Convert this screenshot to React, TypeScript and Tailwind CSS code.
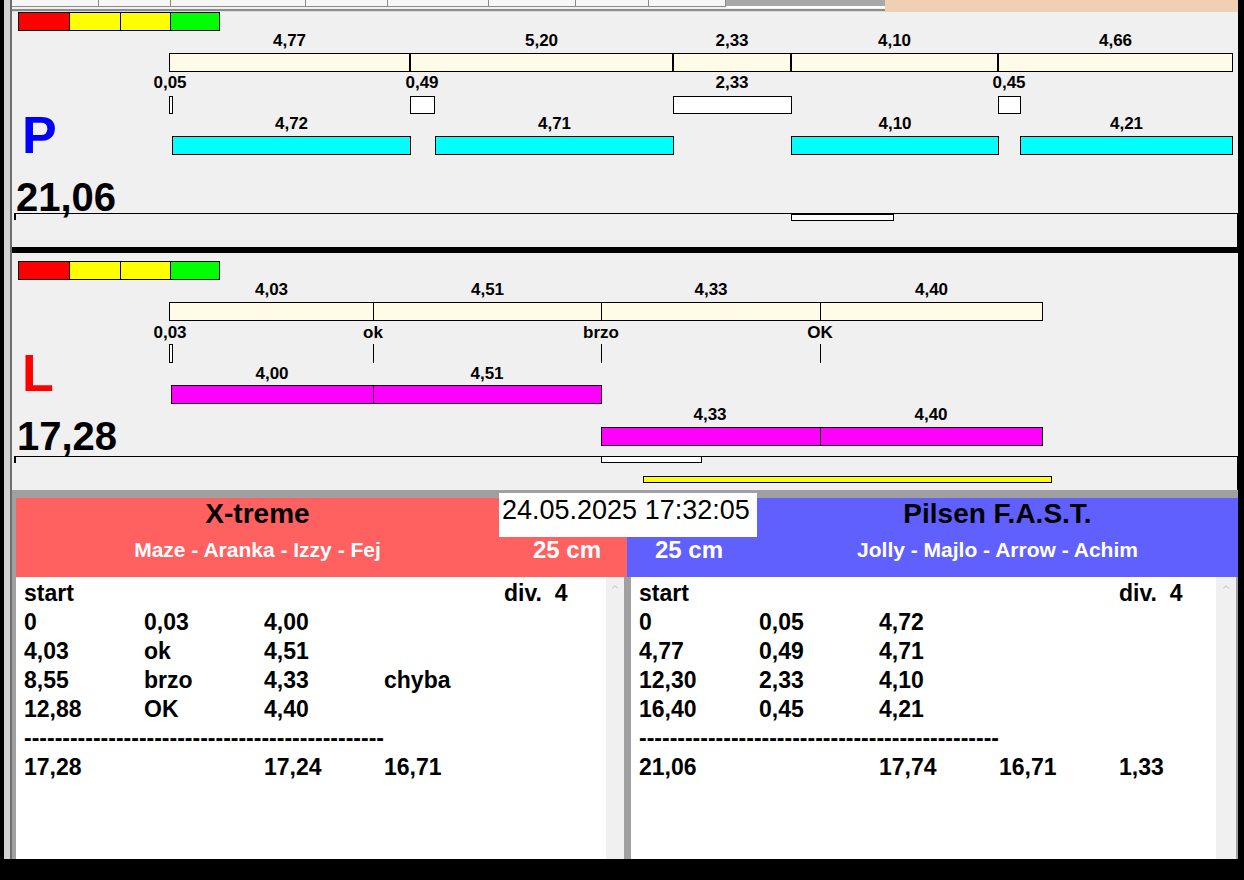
import { ChevronUp } from 'lucide-react';

// Chart canvas coordinates are page pixels; the canvas starts at x = 12.
const OX = 12;

type Span = [number, number];
type Text = [number, string];

// ---------------------------------------------------------------------------
// Canvas primitives
// ---------------------------------------------------------------------------

function Bar({ x1, x2, y, oy, h = 19, color }: { x1: number; x2: number; y: number; oy: number; h?: number; color: string }) {
  return (
    <div
      className={`absolute border border-black ${color}`}
      style={{ left: x1 - OX, width: x2 - x1, top: y - oy, height: h }}
    />
  );
}

function Tick({ x, y, oy }: { x: number; y: number; oy: number }) {
  return <div className="absolute w-px bg-black" style={{ left: x - OX, top: y - oy, height: 19 }} />;
}

function Label({ cx, cap, text, oy }: { cx: number; cap: number; text: string; oy: number }) {
  return (
    <div
      className="absolute -translate-x-1/2 whitespace-nowrap text-[17px] leading-[17px] font-bold text-black"
      style={{ left: cx - OX, top: cap - oy - 2 }}
    >
      {text}
    </div>
  );
}

function Indicator({ y, oy }: { y: number; oy: number }) {
  return (
    <div className="absolute flex h-[19px] w-[202px] border border-black" style={{ left: 18 - OX, top: y - oy }}>
      <div className="w-[50px] bg-[#ff0000]" />
      <div className="w-[51px] border-l border-black bg-[#ffff00]" />
      <div className="w-[50px] border-l border-black bg-[#ffff00]" />
      <div className="flex-1 border-l border-black bg-[#00ff00]" />
    </div>
  );
}

function Track({ y, oy }: { y: number; oy: number }) {
  // the lower strip of each lane: top line + right edge, closed by what follows
  return (
    <div
      className="absolute bottom-0 border-t border-r border-black"
      style={{ left: 14 - OX, width: 1238 - 14, top: y - oy }}
    />
  );
}

// ---------------------------------------------------------------------------
// Lanes
// ---------------------------------------------------------------------------

const center = ([a, b]: Span) => (a + b) / 2;

function LaneP() {
  const oy = 12;
  const cream: Span[] = [[169, 410], [410, 673], [673, 791], [791, 998], [998, 1233]];
  const creamText = ['4,77', '5,20', '2,33', '4,10', '4,66'];
  const gaps: Span[] = [[169, 173], [410, 435], [673, 792], [998, 1021]];
  const gapText: Text[] = [[170, '0,05'], [422, '0,49'], [732, '2,33'], [1009, '0,45']];
  const runs: Span[] = [[172, 411], [435, 674], [791, 999], [1020, 1233]];
  const runText = ['4,72', '4,71', '4,10', '4,21'];

  return (
    <div className="relative h-[235px] bg-[#f0f0f0]">
      <Indicator y={12} oy={oy} />
      {cream.map((s, i) => (
        <Label key={'ct' + i} cx={center(s)} cap={34} text={creamText[i]} oy={oy} />
      ))}
      {cream.map((s, i) => (
        <Bar key={'c' + i} x1={s[0]} x2={s[1]} y={53} oy={oy} color="bg-[#fffbe6]" />
      ))}
      {gapText.map(([x, t]) => (
        <Label key={'gt' + t + x} cx={x} cap={76} text={t} oy={oy} />
      ))}
      {gaps.map((s, i) => (
        <Bar key={'g' + i} x1={s[0]} x2={s[1]} y={96} h={18} oy={oy} color="bg-white" />
      ))}
      {runs.map((s, i) => (
        <Label key={'rt' + i} cx={center(s)} cap={117} text={runText[i]} oy={oy} />
      ))}
      {runs.map((s, i) => (
        <Bar key={'r' + i} x1={s[0]} x2={s[1]} y={136} oy={oy} color="bg-[#00ffff]" />
      ))}

      <div className="absolute left-[10px] top-[97px] text-[52px] leading-[52px] font-bold text-[#0000ff]">P</div>
      <div className="absolute left-[4px] top-[165px] text-[40px] leading-[40px] font-bold text-black">21,06</div>

      <Track y={213} oy={oy} />
      <Bar x1={14} x2={16} y={213} h={7} oy={oy} color="bg-white" />
      <Bar x1={791} x2={894} y={214} h={7} oy={oy} color="bg-white" />
    </div>
  );
}

function LaneL() {
  const oy = 253;
  const cream: Span[] = [[169, 374], [373, 602], [601, 821], [820, 1043]];
  const creamText = ['4,03', '4,51', '4,33', '4,40'];
  const marks: Text[] = [[170, '0,03'], [373, 'ok'], [601, 'brzo'], [820, 'OK']];
  const first: Span[] = [[171, 374], [373, 602]];
  const second: Span[] = [[601, 821], [820, 1043]];

  return (
    <div className="relative h-[237px] bg-[#f0f0f0]">
      <Indicator y={261} oy={oy} />
      {cream.map((s, i) => (
        <Label key={'ct' + i} cx={center(s)} cap={283} text={creamText[i]} oy={oy} />
      ))}
      {cream.map((s, i) => (
        <Bar key={'c' + i} x1={s[0]} x2={s[1]} y={302} oy={oy} color="bg-[#fffbe6]" />
      ))}
      {marks.map(([x, t]) => (
        <Label key={'m' + t} cx={x} cap={326} text={t} oy={oy} />
      ))}
      <Bar x1={169} x2={173} y={344} oy={oy} color="bg-white" />
      <Tick x={373} y={344} oy={oy} />
      <Tick x={601} y={344} oy={oy} />
      <Tick x={820} y={344} oy={oy} />

      <Label cx={272} cap={367} text="4,00" oy={oy} />
      <Label cx={487} cap={367} text="4,51" oy={oy} />
      {first.map((s, i) => (
        <Bar key={'f' + i} x1={s[0]} x2={s[1]} y={385} oy={oy} color="bg-[#ff00ff]" />
      ))}
      <Label cx={710} cap={408} text="4,33" oy={oy} />
      <Label cx={931} cap={408} text="4,40" oy={oy} />
      {second.map((s, i) => (
        <Bar key={'s' + i} x1={s[0]} x2={s[1]} y={427} oy={oy} color="bg-[#ff00ff]" />
      ))}

      <div className="absolute left-[10px] top-[94px] text-[52px] leading-[52px] font-bold text-[#ff0000]">L</div>
      <div className="absolute left-[5px] top-[163px] text-[40px] leading-[40px] font-bold text-black">17,28</div>

      <Track y={456} oy={oy} />
      <Bar x1={14} x2={16} y={456} h={7} oy={oy} color="bg-white" />
      <Bar x1={601} x2={702} y={456} h={7} oy={oy} color="bg-white" />
      <Bar x1={643} x2={1052} y={476} h={7} oy={oy} color="bg-[#ffff00]" />
    </div>
  );
}

// ---------------------------------------------------------------------------
// Result lists
// ---------------------------------------------------------------------------

const DASHES = '-'.repeat(47);

function ResultList({ rows, total, width }: { rows: string[][]; total: string[]; width: string }) {
  return (
    <div className={`${width} bg-white pl-[8px] pt-[2px] text-[23px] leading-[29px] font-bold text-black`}>
      <div className="grid grid-cols-[repeat(5,120px)] whitespace-pre">
        <span>start</span>
        <span />
        <span />
        <span />
        <span>div.  4</span>
      </div>
      {rows.map((r, i) => (
        <div key={i} className="grid grid-cols-[repeat(5,120px)] whitespace-pre">
          {r.map((c, j) => (
            <span key={j}>{c}</span>
          ))}
        </div>
      ))}
      <div className="h-[29px] whitespace-pre">{DASHES}</div>
      <div className="grid grid-cols-[repeat(5,120px)] whitespace-pre">
        {total.map((c, j) => (
          <span key={j}>{c}</span>
        ))}
      </div>
    </div>
  );
}

function Scrollbar({ width }: { width: string }) {
  return (
    <div className={`${width} flex justify-center bg-[#f0f0f0] pt-[5px]`}>
      <ChevronUp size={10} strokeWidth={2} className="text-[#b4b4b4]" />
    </div>
  );
}

// ---------------------------------------------------------------------------
// Window chrome
// ---------------------------------------------------------------------------

const TABS = ['w-[87px]', 'w-[72px]', 'w-[135px]', 'w-[82px]', 'w-[101px]', 'w-[87px]', 'w-[73px]', 'w-[77px]'];

function TabStrip() {
  return (
    <div className="flex h-[12px]">
      <div className="flex w-[714px] flex-col bg-[#f0f0f0]">
        <div className="flex h-[7px]">
          {TABS.map((w, i) => (
            <div key={i} className={`${w} border-r border-b border-[#8a8a8a] bg-[#f6f6f6]`} />
          ))}
        </div>
        <div className="h-[2px]" />
        <div className="h-[2px] bg-[#8c8c8c]" />
        <div className="h-px bg-[#dadada]" />
      </div>
      <div className="flex w-[159px] flex-col">
        <div className="h-[6px] bg-[#a9a9a9]" />
        <div className="h-[2px] bg-white" />
        <div className="h-px bg-[#f0f0f0]" />
        <div className="h-[2px] bg-[#8c8c8c]" />
        <div className="h-px bg-[#dadada]" />
      </div>
      <div className="flex-1 bg-[#f0d0b4]" />
    </div>
  );
}

export default function App() {
  return (
    <div className="flex h-[880px] w-[1244px] flex-col bg-black font-['Liberation_Sans',Arial,sans-serif]">
      <div className="flex h-[859px]">
        <div className="w-[4px]" />
        <div className="w-[6px] bg-[#d2d2d2]" />
        <div className="w-[2px] bg-[#6e6e6e]" />

        <div className="flex w-[1226px] flex-col">
          <TabStrip />
          <LaneP />
          <div className="h-[6px] bg-black" />
          <LaneL />

          {/* Team headers + split lists */}
          <div className="relative flex flex-1 flex-col bg-[#a0a0a0] pl-[4px] pt-[8px]">
            <div className="flex h-[79px]">
              <div className="flex w-[611px] flex-col bg-[#ff6060]">
                <div className="w-[483px] pt-px text-center text-[28px] leading-[30px] font-bold text-black">X-treme</div>
                <div className="mt-[8px] flex h-[26px] items-start">
                  <div className="w-[483px] text-center text-[21px] leading-[26px] font-bold text-white">
                    Maze - Aranka - Izzy - Fej
                  </div>
                  <div className="flex-1 pr-[26px] text-right text-[24px] leading-[26px] font-bold text-white">25 cm</div>
                </div>
              </div>
              <div className="flex w-[611px] flex-col bg-[#6060ff]">
                <div className="ml-[130px] w-[481px] pt-px text-center text-[28px] leading-[30px] font-bold text-black">
                  Pilsen F.A.S.T.
                </div>
                <div className="mt-[8px] flex h-[26px] items-start">
                  <div className="w-[130px] pl-[28px] text-[24px] leading-[26px] font-bold text-white">25 cm</div>
                  <div className="w-[481px] text-center text-[21px] leading-[26px] font-bold text-white">
                    Jolly - Majlo - Arrow - Achim
                  </div>
                </div>
              </div>
            </div>

            <div className="flex flex-1">
              <ResultList
                width="w-[590px]"
                rows={[
                  ['0', '0,03', '4,00'],
                  ['4,03', 'ok', '4,51'],
                  ['8,55', 'brzo', '4,33', 'chyba'],
                  ['12,88', 'OK', '4,40'],
                ]}
                total={['17,28', '', '17,24', '16,71']}
              />
              <Scrollbar width="w-[18px]" />
              <div className="w-[7px]" />
              <ResultList
                width="w-[585px]"
                rows={[
                  ['0', '0,05', '4,72'],
                  ['4,77', '0,49', '4,71'],
                  ['12,30', '2,33', '4,10'],
                  ['16,40', '0,45', '4,21'],
                ]}
                total={['21,06', '', '17,74', '16,71', '1,33']}
              />
              <Scrollbar width="w-[20px]" />
            </div>

            {/* timestamp box sits over the band and both headers */}
            <div className="absolute left-[487px] top-[3px] h-[44px] w-[258px] bg-white pl-[3px] pt-[4px] text-[27px] leading-[27px] text-black">
              24.05.2025 17:32:05
            </div>
          </div>
        </div>

        <div className="w-[6px]" />
      </div>
    </div>
  );
}
